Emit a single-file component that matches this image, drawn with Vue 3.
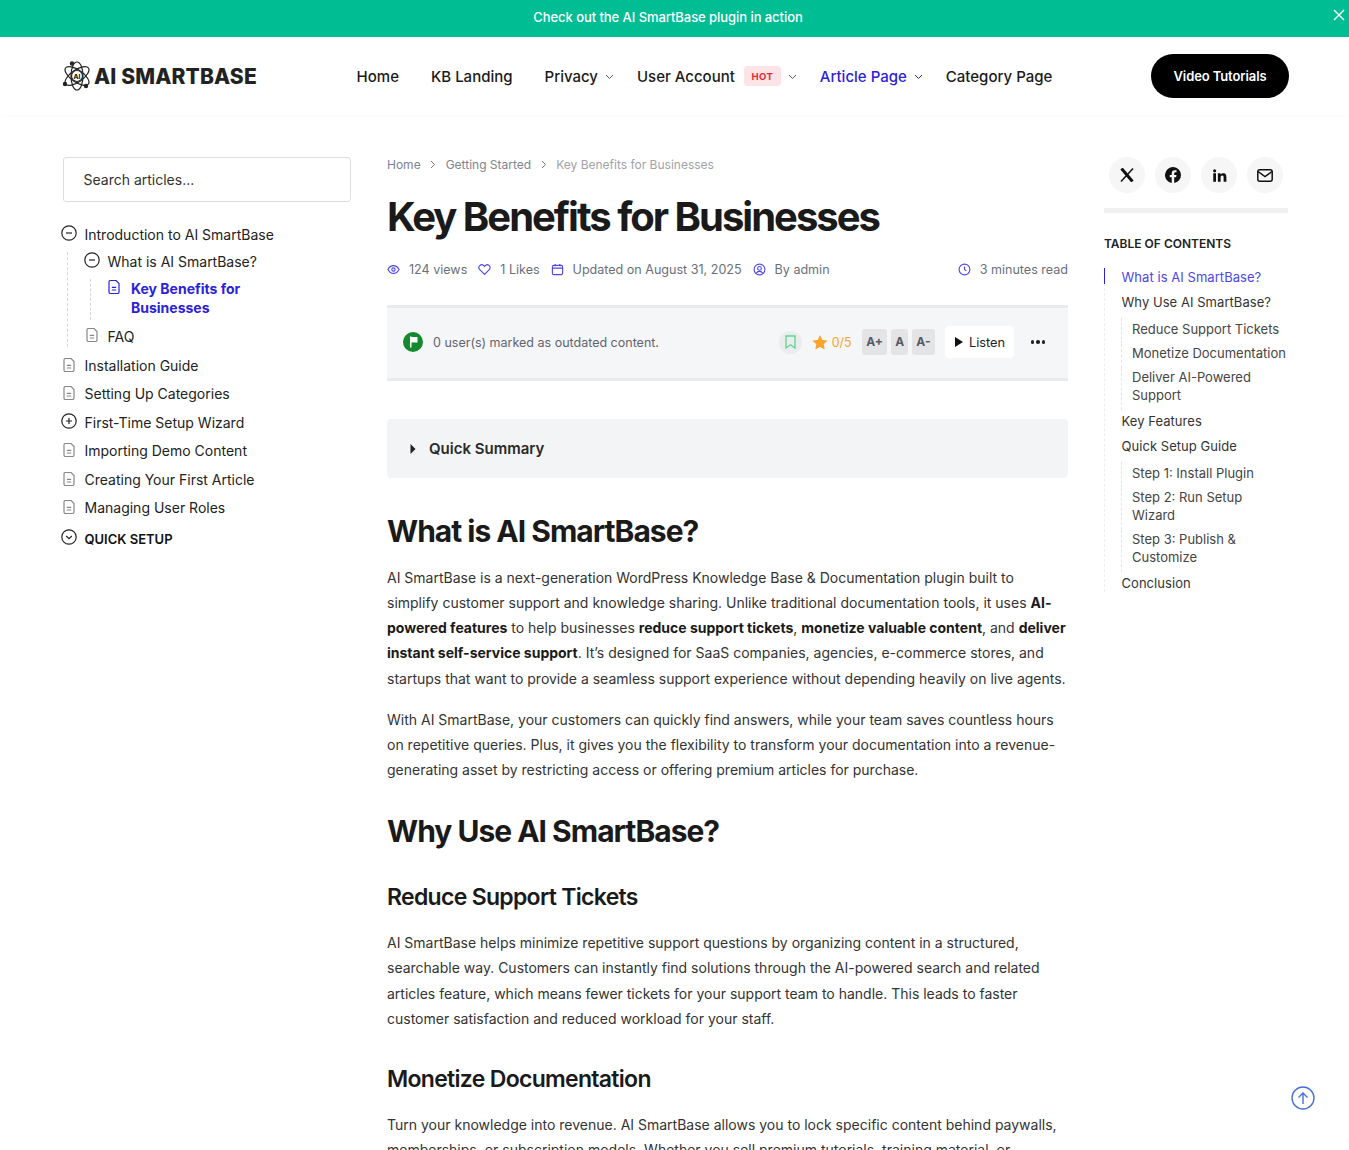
<template>
  <div class="page">
    <div class="notice">
      <span>Check out the AI SmartBase plugin in action</span>
      <svg class="notice-close" width="14" height="14" viewBox="0 0 14 14"><path d="M2 2l10 10M12 2L2 12" stroke="#fff" stroke-width="1.4" /></svg>
    </div>

    <header class="header">
      <div class="logo">
        <svg width="30" height="32" viewBox="0 0 30 32" fill="none" stroke="#222" stroke-width="1.2">
          <ellipse cx="15" cy="16" rx="14" ry="6" transform="rotate(35 15 16)" />
          <ellipse cx="15" cy="16" rx="14" ry="6" transform="rotate(-35 15 16)" />
          <ellipse cx="15" cy="16" rx="6" ry="14" />
          <circle cx="15" cy="16" r="5.5" fill="#fff" />
          <circle cx="10" cy="3.5" r="1.6" fill="#222" />
          <circle cx="3" cy="24" r="1.6" fill="#222" />
          <circle cx="24" cy="26" r="1.6" fill="#222" />
          <text x="15" y="18.5" text-anchor="middle" font-size="6.5" fill="#222" stroke="none" font-family="Inter, sans-serif">AI</text>
        </svg>
        <span>AI SMARTBASE</span>
      </div>
      <nav class="nav">
        <a>Home</a>
        <a>KB Landing</a>
        <a class="has-sub">Privacy <svg class="chev" width="9" height="6" viewBox="0 0 9 6"><path d="M1 1l3.5 3.5L8 1" fill="none" stroke="#555" stroke-width="1" /></svg></a>
        <a class="has-sub">User Account <span class="hot">HOT</span> <svg class="chev" width="9" height="6" viewBox="0 0 9 6"><path d="M1 1l3.5 3.5L8 1" fill="none" stroke="#555" stroke-width="1" /></svg></a>
        <a class="has-sub active">Article Page <svg class="chev" width="9" height="6" viewBox="0 0 9 6"><path d="M1 1l3.5 3.5L8 1" fill="none" stroke="#2b22d8" stroke-width="1" /></svg></a>
        <a>Category Page</a>
      </nav>
      <button class="video-btn">Video Tutorials</button>
    </header>

    <div class="layout">
      <aside class="sidebar">
        <div class="search">Search articles...</div>
        <ul class="tree">
          <li class="tree-row first">
            <svg class="ico-round" viewBox="0 0 16 16"><circle cx="8" cy="8" r="7.2" /><path d="M5 8h6" /></svg>
            <span>Introduction to AI SmartBase</span>
          </li>
          <li class="nested-wrap">
            <ul class="nested">
              <li class="tree-row sub">
                <svg class="ico-round" viewBox="0 0 16 16"><circle cx="8" cy="8" r="7.2" /><path d="M5 8h6" /></svg>
                <span>What is AI SmartBase?</span>
              </li>
              <li class="nested-wrap">
                <ul class="nested deep">
                  <li class="tree-row current">
                    <svg class="ico-doc" viewBox="0 0 12 14"><path d="M1 2a1.500 1.500 0 0 1 1.500-1.500H8L11 3.600v8.400a1.500 1.500 0 0 1-1.500 1.500h-7A1.500 1.500 0 0 1 1 12zM3.800 7.400h4.400M3.800 10h4.400" /></svg>
                    <span>Key Benefits for Businesses</span>
                  </li>
                </ul>
              </li>
              <li class="tree-row sub faq">
                <svg class="ico-doc" viewBox="0 0 12 14"><path d="M1 2a1.500 1.500 0 0 1 1.500-1.500H8L11 3.600v8.400a1.500 1.500 0 0 1-1.500 1.500h-7A1.500 1.500 0 0 1 1 12zM3.800 7.400h4.400M3.800 10h4.400" /></svg>
                <span>FAQ</span>
              </li>
            </ul>
          </li>
          <li v-for="item in treeItems" :key="item.label" class="tree-row">
            <svg v-if="item.plus" class="ico-round" viewBox="0 0 16 16"><circle cx="8" cy="8" r="7.2" /><path d="M5 8h6M8 5v6" /></svg>
            <svg v-else class="ico-doc" viewBox="0 0 12 14"><path d="M1 2a1.500 1.500 0 0 1 1.500-1.500H8L11 3.600v8.400a1.500 1.500 0 0 1-1.500 1.500h-7A1.500 1.500 0 0 1 1 12zM3.800 7.400h4.400M3.800 10h4.400" /></svg>
            <span>{{ item.label }}</span>
          </li>
          <li class="tree-row section">
            <svg class="ico-round" viewBox="0 0 16 16"><circle cx="8" cy="8" r="7.2" /><path d="M5.2 7l2.8 2.6L10.800 7" /></svg>
            <span>QUICK SETUP</span>
          </li>
        </ul>
      </aside>

      <main class="content">
        <div class="crumbs">
          <span>Home</span>
          <svg width="6" height="9" viewBox="0 0 6 9"><path d="M1 1l3.500 3.500L1 8" fill="none" stroke="#777" /></svg>
          <span>Getting Started</span>
          <svg width="6" height="9" viewBox="0 0 6 9"><path d="M1 1l3.500 3.500L1 8" fill="none" stroke="#777" /></svg>
          <span class="crumb-last">Key Benefits for Businesses</span>
        </div>
        <h1>Key Benefits for Businesses</h1>

        <div class="meta">
          <span class="meta-item">
            <svg viewBox="0 0 14 14"><path d="M1 7c1.500-2.800 3.500-4.200 6-4.200S11.500 4.200 13 7c-1.500 2.800-3.500 4.200-6 4.200S2.500 9.800 1 7z" /><circle cx="7" cy="7" r="1.800" /></svg>
            124 views
          </span>
          <span class="meta-item">
            <svg viewBox="0 0 14 14"><path d="M7 12.300L1.900 7.200a3 3 0 0 1 4.300-4.300l.8.800.8-.8a3 3 0 0 1 4.300 4.300z" /></svg>
            1 Likes
          </span>
          <span class="meta-item">
            <svg viewBox="0 0 14 14"><rect x="1.500" y="2.500" width="11" height="10" rx="1.500" /><path d="M1.500 5.500h11M4.500 1v2.500M9.500 1v2.500" /></svg>
            Updated on August 31, 2025
          </span>
          <span class="meta-item">
            <svg viewBox="0 0 14 14"><circle cx="7" cy="7" r="5.800" /><circle cx="7" cy="5.800" r="2" /><path d="M3.500 11.200c.7-1.600 2-2.200 3.500-2.200s2.800.6 3.500 2.200" /></svg>
            By admin
          </span>
          <span class="meta-item read">
            <svg viewBox="0 0 14 14"><circle cx="7" cy="7" r="5.800" /><path d="M7 3.800V7l2 1.500" /></svg>
            3 minutes read
          </span>
        </div>

        <div class="toolbar">
          <span class="flag">
            <svg width="11" height="12" viewBox="0 0 11 12"><path d="M2 0.500h1.500v11H2zM3.500 1H9.500V6.500H3.500z" fill="#fff" /></svg>
          </span>
          <span class="outdated">0 user(s) marked as outdated content.</span>
          <span class="bookmark">
            <svg width="11" height="14" viewBox="0 0 11 14"><path d="M1 1h9v12L5.500 9.800 1 13z" fill="none" stroke="#5fd38d" stroke-width="1.300" /></svg>
          </span>
          <span class="rating">
            <svg width="16" height="15" viewBox="0 0 16 15"><path d="M8 0l2.300 4.900 5.400.7-4 3.700 1 5.300L8 12l-4.700 2.600 1-5.300-4-3.700 5.400-.7z" fill="#f9a42b" /></svg>
            0/5
          </span>
          <span class="font-btns">
            <span class="font-btn">A+</span>
            <span class="font-btn">A</span>
            <span class="font-btn">A-</span>
          </span>
          <span class="listen">
            <svg width="8" height="10" viewBox="0 0 8 10"><path d="M0 0l8 5-8 5z" fill="#111" /></svg>
            Listen
          </span>
          <span class="dots"><i></i><i></i><i></i></span>
        </div>

        <div class="summary">
          <svg width="6" height="10" viewBox="0 0 6 10"><path d="M0.500 0l5 5-5 5z" fill="#222" /></svg>
          <span>Quick Summary</span>
        </div>

        <h2>What is AI SmartBase?</h2>
        <p>AI SmartBase is a next-generation WordPress Knowledge Base &amp; Documentation plugin built to simplify customer support and knowledge sharing. Unlike traditional documentation tools, it uses <b>AI-powered features</b> to help businesses <b>reduce support tickets</b>, <b>monetize valuable content</b>, and <b>deliver instant self-service support</b>. It’s designed for SaaS companies, agencies, e-commerce stores, and startups that want to provide a seamless support experience without depending heavily on live agents.</p>
        <p>With AI SmartBase, your customers can quickly find answers, while your team saves countless hours on repetitive queries. Plus, it gives you the flexibility to transform your documentation into a revenue-generating asset by restricting access or offering premium articles for purchase.</p>

        <h2 class="second">Why Use AI SmartBase?</h2>
        <h3>Reduce Support Tickets</h3>
        <p>AI SmartBase helps minimize repetitive support questions by organizing content in a structured, searchable way. Customers can instantly find solutions through the AI-powered search and related articles feature, which means fewer tickets for your support team to handle. This leads to faster customer satisfaction and reduced workload for your staff.</p>
        <h3 class="monetize">Monetize Documentation</h3>
        <p>Turn your knowledge into revenue. AI SmartBase allows you to lock specific content behind paywalls, memberships, or subscription models. Whether you sell premium tutorials, training material, or</p>
      </main>

      <aside class="toc-col">
        <div class="share">
          <span class="share-btn"><svg width="14" height="14" viewBox="0 0 14 14"><path d="M1.500 0.500L12.500 13.500" fill="none" stroke="#111" stroke-width="3" /><path d="M13 0.500L1 13.500" fill="none" stroke="#111" stroke-width="1.500" /></svg></span>
          <span class="share-btn"><svg width="16" height="16" viewBox="0 0 24 24"><path d="M24 12a12 12 0 1 0-13.900 11.900v-8.400h-3V12h3V9.400c0-3 1.800-4.700 4.500-4.700 1.300 0 2.700.2 2.700.2v3h-1.500c-1.500 0-2 .9-2 1.900V12h3.400l-.5 3.500h-2.900v8.400A12 12 0 0 0 24 12z" fill="#111" /></svg></span>
          <span class="share-btn"><svg width="15" height="15" viewBox="0 0 24 24"><path d="M2 8.500h4.400V22H2zM4.200 2a2.500 2.500 0 1 1 0 5 2.500 2.500 0 0 1 0-5zM9.400 8.500h4.200v1.900c.7-1.200 2.200-2.200 4.300-2.200 4.400 0 5.100 2.800 5.100 6.500V22h-4.400v-6.600c0-1.700-.1-3.500-2.200-3.500s-2.600 1.600-2.600 3.400V22H9.400z" fill="#111" /></svg></span>
          <span class="share-btn"><svg width="16" height="13" viewBox="0 0 16 13"><rect x="0.800" y="0.800" width="14.400" height="11.400" rx="2" fill="none" stroke="#111" stroke-width="1.500" /><path d="M1 2.500l7 5 7-5" fill="none" stroke="#111" stroke-width="1.500" /></svg></span>
        </div>
        <div class="toc-title">TABLE OF CONTENTS</div>
        <ul class="toc">
          <li class="toc-main on">What is AI SmartBase?</li>
          <li class="toc-main">Why Use AI SmartBase?</li>
          <li class="toc-sub first-sub">Reduce Support Tickets</li>
          <li class="toc-sub">Monetize Documentation</li>
          <li class="toc-sub">Deliver AI-Powered Support</li>
          <li class="toc-main after-sub">Key Features</li>
          <li class="toc-main">Quick Setup Guide</li>
          <li class="toc-sub first-sub">Step 1: Install Plugin</li>
          <li class="toc-sub">Step 2: Run Setup Wizard</li>
          <li class="toc-sub">Step 3: Publish &amp; Customize</li>
          <li class="toc-main after-sub">Conclusion</li>
        </ul>
      </aside>
    </div>

    <div class="to-top">
      <svg width="24" height="24" viewBox="0 0 24 24" fill="none" stroke="#4a6fd8" stroke-width="1.400"><circle cx="12" cy="12" r="11" /><path d="M12 18V7M7.500 11.500L12 7l4.500 4.500" /></svg>
    </div>
  </div>
</template>

<script setup>
const treeItems = [
  { label: 'Installation Guide' },
  { label: 'Setting Up Categories' },
  { label: 'First-Time Setup Wizard', plus: true },
  { label: 'Importing Demo Content' },
  { label: 'Creating Your First Article' },
  { label: 'Managing User Roles' }
]
</script>

<style>
html, body { margin: 0; background: #fff; }
</style>

<style scoped>
.page {
  position: relative;
  height: 1150px;
  overflow: hidden;
  font-family: Inter, "Liberation Sans", sans-serif;
  color: #1a1a1a;
  background: #fff;
}
ul { list-style: none; margin: 0; padding: 0; }

.notice {
  position: relative;
  height: 37px;
  box-sizing: border-box;
  background: #00bd94;
  color: #fff;
  font-size: 13px;
  font-weight: 500;
  letter-spacing: -.06px;
  display: flex;
  align-items: center;
  justify-content: center;
  padding: 0 13px 3px 0;
}
.notice-close { position: absolute; right: 3px; top: 8px; }

.header {
  height: 78px;
  padding: 0 60px 0 62px;
  display: flex;
  align-items: center;
  box-shadow: 0 2px 4px rgba(0,0,0,.015);
  margin-bottom: 42px;
}
.logo {
  width: 294.600px;
  display: flex;
  align-items: center;
  gap: 2px;
  font-size: 21px;
  font-weight: 800;
  letter-spacing: .15px;
  color: #222;
  white-space: nowrap;
}
.nav {
  display: flex;
  align-items: center;
  gap: 32px;
  font-size: 15px;
  font-weight: 500;
  color: #1a1a1a;
  flex: 1;
}
.nav a { white-space: nowrap; display: flex; align-items: center; }
.nav .has-sub { margin-right: -9px; }
.nav .active { color: #2b22d8; }
.chev { margin-left: 7px; margin-top: 1px; }
.hot {
  margin-left: 9px;
  height: 20px;
  width: 37px;
  display: inline-flex;
  align-items: center;
  justify-content: center;
  background: #fce4e6;
  color: #e5283c;
  font-size: 9.500px;
  font-weight: 700;
  letter-spacing: .4px;
  border-radius: 4px;
}
.hot + .chev { margin-left: 7px; }
.video-btn {
  width: 138px;
  height: 44px;
  border: 0;
  border-radius: 22px;
  background: #000;
  color: #fff;
  font: 600 13px Inter, sans-serif;
  letter-spacing: -.1px;
}

.layout {
  display: grid;
  grid-template-columns: 288px 681px 184px;
  gap: 36px;
  padding: 0 61px 0 63px;
}

.search {
  height: 45px;
  border: 1px solid #ddd;
  border-radius: 3px;
  box-sizing: border-box;
  padding-left: 19.500px;
  display: flex;
  align-items: center;
  font-size: 14px;
  color: #333;
  margin-bottom: 23px;
}
.tree { font-size: 14px; color: #222; margin-left: -2px; }
.tree-row {
  display: flex;
  align-items: flex-start;
  gap: 7.500px;
  line-height: 20px;
  margin-bottom: 8.500px;
}
.tree-row.first { margin-bottom: 7px; }
.ico-round {
  width: 16px;
  height: 16px;
  flex: none;
  fill: none;
  stroke: #222;
  stroke-width: 1.200;
}
.ico-doc {
  width: 12px;
  height: 14px;
  flex: none;
  fill: none;
  stroke: #888;
  stroke-width: 1.200;
  margin: 2px 2px 0 2px;
}
.nested-wrap { position: relative; }
.nested {
  margin-left: 6px;
  padding-left: 16px;
  border-left: 1px dashed #d6d6d6;
  margin-bottom: 8.500px;
}
.nested.deep { margin-bottom: 6px; padding-bottom: 3px; }
.tree-row.sub { margin-bottom: 7px; }
.tree-row.faq { margin-bottom: 0; padding-top: 1px; }
.tree-row.faq .ico-doc { margin-top: 1px; }
.current { color: #2b22d8; font-weight: 700; margin-bottom: 0; gap: 9px; margin-left: -1px; }
.current .ico-doc { stroke: #2b22d8; margin-top: 1px; }
.current span { width: 130px; line-height: 19px; }
.section { font-weight: 600; font-size: 13px; margin-top: 11px; color: #111; }

.crumbs {
  display: flex;
  align-items: center;
  gap: 9.500px;
  font-size: 12px;
  color: #80848e;
  height: 14px;
}
.crumb-last { color: #a0a3aa; }
h1 {
  margin: 22px 0 18px;
  font-size: 40px;
  line-height: 48px;
  font-weight: 700;
  letter-spacing: -2px;
  color: #1a1a1a;
}
.meta {
  display: flex;
  align-items: center;
  gap: 11px;
  font-size: 12.550px;
  color: #6a6f7a;
  height: 20px;
  margin-bottom: 26px;
}
.meta-item { display: flex; align-items: center; gap: 9px; white-space: nowrap; }
.meta-item svg {
  width: 13px;
  height: 13px;
  fill: none;
  stroke: #4f46e5;
  stroke-width: 1.200;
}
.read { margin-left: auto; }

.toolbar {
  height: 76px;
  box-sizing: border-box;
  border-top: 3px solid #e9eaec;
  border-bottom: 3px solid #e9eaec;
  background: #f5f6f8;
  display: flex;
  align-items: center;
  padding: 0 23px 2px 16px;
  margin-bottom: 38px;
}
.flag {
  width: 20px;
  height: 20px;
  border-radius: 50%;
  background: #138a2e;
  display: flex;
  align-items: center;
  justify-content: center;
  margin-right: 10px;
}
.outdated { font-size: 12.500px; color: #5f6470; flex: 1; }
.bookmark {
  width: 23px;
  height: 23px;
  border-radius: 50%;
  background: #ebecee;
  display: flex;
  align-items: center;
  justify-content: center;
  margin-right: 10px;
}
.rating { display: flex; align-items: center; gap: 4px; font-size: 12.500px; color: #f9a42b; margin-right: 10px; }
.font-btns { display: flex; gap: 4px; margin-right: 10px; }
.font-btn {
  padding: 0 4px;
  height: 26px;
  line-height: 26px;
  background: #e4e4e6;
  border-radius: 3px;
  font-size: 12px;
  font-weight: 700;
  color: #555a66;
}
.font-btn:first-child { padding: 0 4.500px; }
.listen {
  width: 69px;
  height: 32px;
  background: #fff;
  border-radius: 4px;
  display: flex;
  align-items: center;
  justify-content: center;
  gap: 6px;
  font-size: 12.800px;
  color: #222;
  margin-right: 17px;
  padding-left: 2px;
  box-sizing: border-box;
}
.dots { display: flex; gap: 2px; }
.dots i { width: 3.500px; height: 3.500px; border-radius: 50%; background: #222; }

.summary {
  height: 59px;
  background: #f3f4f6;
  border-radius: 4px;
  display: flex;
  align-items: center;
  gap: 13px;
  padding-left: 23px;
  font-size: 15px;
  font-weight: 600;
  color: #2a2a2a;
  margin-bottom: 33px;
}

h2 {
  margin: 0 0 13.800px;
  font-size: 30px;
  line-height: 40px;
  font-weight: 700;
  letter-spacing: -1px;
  color: #1a1a1a;
}
h2.second { margin-top: 28.200px; margin-bottom: 30px; }
h3 {
  margin: 0 0 17.500px;
  font-size: 23px;
  line-height: 32px;
  font-weight: 600;
  letter-spacing: -.7px;
  color: #1a1a1a;
}
h3.monetize { margin-top: 32.500px; margin-bottom: 16.500px; }
p {
  margin: 0 0 16px;
  font-size: 14px;
  line-height: 25.200px;
  color: #333;
}
p b { color: #1a1a1a; font-weight: 700; }

.share { display: flex; gap: 10px; padding-left: 5px; padding-bottom: 15px; border-bottom: 5px solid #f0f0f0; }
.share-btn {
  width: 36px;
  height: 36px;
  border-radius: 50%;
  background: #f6f6f6;
  display: flex;
  align-items: center;
  justify-content: center;
}
.toc-title { margin-top: 23px; font-size: 12px; font-weight: 600; color: #222; line-height: 16px; margin-bottom: 16px; }
.toc { font-size: 13px; color: #333; border-left: 1px dashed #eee; }
.toc-main { position: relative; padding-left: 16.500px; line-height: 18px; margin-bottom: 7px; letter-spacing: .05px; }
.toc-main.on { color: #4f46e5; }
.toc-main.on::before {
  content: "";
  position: absolute;
  left: -1px;
  top: 0;
  width: 1px;
  height: 16px;
  background: #2b22d8;
}
.toc-main.after-sub { margin-top: 2px; }
.toc-sub { margin-left: 16px; padding-left: 10px; border-left: 1px dashed #e5e5e5; line-height: 18px; padding-bottom: 6px; color: #444; }
.toc-sub.first-sub { padding-top: 2px; }

.to-top { position: absolute; left: 1291px; top: 1086px; width: 24px; height: 24px; }
</style>
